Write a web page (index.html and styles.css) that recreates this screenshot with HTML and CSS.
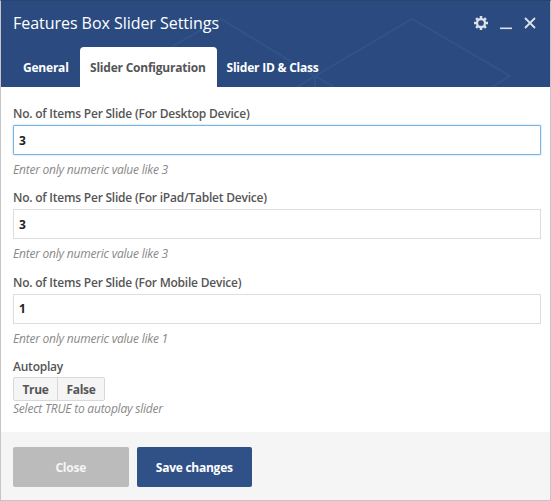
FILE: index.html
```html
<!DOCTYPE html>
<html lang="en">
<head>
<meta charset="utf-8">
<title>Features Box Slider Settings</title>
<link rel="stylesheet" href="styles.css">
</head>
<body>
<div class="panel">
  <header class="header">
    <svg class="pattern" viewBox="0 0 551 87" aria-hidden="true">
      <path d="M171 47 L221 19 L315 76 L412 19 L510 76 L492 87 M315 76 L297 87 M315 76 L334 87 M315 76 V87"/>
    </svg>
    <div class="titlebar">
      <h1 class="title">Features Box Slider Settings</h1>
      <div class="controls">
        <svg class="gear" viewBox="0 0 14 14" aria-hidden="true">
          <circle cx="7" cy="7" r="4" fill="none" stroke="currentColor" stroke-width="2.3"/>
          <path d="M7 0V2.5M7 11.5V14M0 7H2.5M11.5 7H14M2.1 2.1L3.8 3.8M10.2 10.2L11.9 11.9M2.1 11.9L3.8 10.2M10.2 3.8L11.9 2.1" stroke="currentColor" stroke-width="2.5"/>
        </svg>
        <svg class="minimize" viewBox="0 0 12 14" aria-hidden="true"><path d="M0 12.3H12" stroke="currentColor" stroke-width="1.6"/></svg>
        <svg class="close" viewBox="0 0 12 14" aria-hidden="true"><path d="M1 2L11 12M11 2L1 12" stroke="currentColor" stroke-width="1.8"/></svg>
      </div>
    </div>
    <nav class="tabs">
      <a class="tab general">General</a>
      <a class="tab active">Slider Configuration</a>
      <a class="tab">Slider ID &amp; Class</a>
    </nav>
  </header>
  <main class="content">
    <div class="field">
      <label class="label" for="desktop">No. of Items Per Slide (For Desktop Device)</label>
      <input class="input focused" id="desktop" value="3">
      <p class="hint">Enter only numeric value like 3</p>
    </div>
    <div class="field">
      <label class="label" for="tablet">No. of Items Per Slide (For iPad/Tablet Device)</label>
      <input class="input" id="tablet" value="3">
      <p class="hint">Enter only numeric value like 3</p>
    </div>
    <div class="field">
      <label class="label" for="mobile">No. of Items Per Slide (For Mobile Device)</label>
      <input class="input" id="mobile" value="1">
      <p class="hint">Enter only numeric value like 1</p>
    </div>
    <div class="autoplay">
      <span class="label">Autoplay</span>
      <div class="toggle"><button class="option">True</button><button class="option">False</button></div>
      <p class="hint">Select TRUE to autoplay slider</p>
    </div>
  </main>
  <footer class="footer">
    <button class="action dismiss">Close</button>
    <button class="action save">Save changes</button>
  </footer>
</div>
</body>
</html>
```
FILE: styles.css
```css
* { box-sizing: border-box; }
body { margin: 0; font-family: "Open Sans", sans-serif; font-size: 12px; }
.panel { width: 551px; height: 501px; display: flex; flex-direction: column; border: 1px solid #c6c6c6; border-top-color: #2c4370; background: #fff; overflow: hidden; }
.header { position: relative; height: 86px; margin: 0 -1px; padding: 0 15px 0 13px; background: #2b4b80; color: #fff; flex: none; }
.pattern { position: absolute; left: 0; top: -1px; width: 551px; height: 87px; fill: none; stroke: #305389; stroke-width: 2; }
.titlebar { position: relative; display: flex; justify-content: space-between; height: 46px; }
.title { margin: 0; font-size: 16px; line-height: 44px; font-weight: 400; letter-spacing: -0.04px; white-space: nowrap; }
.controls { display: flex; height: 14px; margin-top: 15px; color: #dce1ea; }
.gear { width: 14px; height: 14px; margin-right: 12px; }
.minimize { width: 12px; height: 14px; margin-right: 12px; }
.close { width: 12px; height: 14px; }
.tabs { position: relative; display: flex; height: 40px; line-height: 41px; font-weight: 700; letter-spacing: -0.22px; }
.tab { padding: 0 10px; white-space: nowrap; }
.general { width: 66.5px; }
.active { width: 137px; padding-left: 10.5px; background: #fff; color: #555; border-radius: 4px 4px 0 0; }
.content { height: 345px; padding: 19px 10px 0 12px; flex: none; letter-spacing: -0.22px; }
.field { height: 84.4px; }
.label { display: block; height: 19px; line-height: 16px; font-weight: 600; color: #555; }
.input { display: block; width: 528px; height: 30px; margin: 0; padding: 0 5px; border: 1px solid #ddd; outline: 0; font: 700 12px "Open Sans", sans-serif; color: #222; background: #fff; }
.focused { border-color: #7fb2dd; box-shadow: 0 0 2px #8ccbf0; border-radius: 1px; }
.hint { margin: 7px 0 0; line-height: 16px; font-style: italic; color: #888; white-space: nowrap; }
.toggle { display: flex; width: 92px; height: 24px; margin-top: -1px; border: 1px solid #d8d8d8; border-radius: 2px; background: #f5f5f5; }
.option { width: 43px; padding: 0; border: 0; background: transparent; font: 700 12px "Open Sans", sans-serif; letter-spacing: -0.3px; color: #555; }
.option + .option { width: 47px; border-left: 1px solid #d8d8d8; }
.autoplay .hint { margin-top: 0; }
.footer { flex: 1; display: flex; gap: 8px; padding: 15px 12px; background: #f5f5f5; }
.action { width: 115.5px; height: 40px; padding: 0; border: 0; border-radius: 2px; color: #fff; font: 700 12px "Open Sans", sans-serif; letter-spacing: -0.25px; }
.dismiss { background: #bbb; color: #f5f5f5; }
.save { background: #2f5187; }
```
